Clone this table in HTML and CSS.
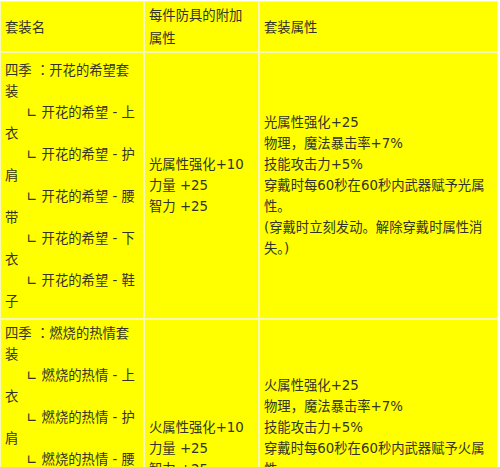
FILE: index.html
```html
<!DOCTYPE html>
<html lang="zh-CN">
<head>
<meta charset="utf-8">
<title>套装属性</title>
<link rel="stylesheet" href="styles.css">
</head>
<body>
<table class="sets">
  <colgroup>
    <col class="c-name">
    <col class="c-piece">
    <col class="c-set">
  </colgroup>
  <tr class="head">
    <td>套装名</td>
    <td>每件防具的附加属性</td>
    <td>套装属性</td>
  </tr>
  <tr class="set first">
    <td class="name">四季 <span class="colon" lang="zh-TW">：</span>开花的希望套装<br>&nbsp;&nbsp;&nbsp;&nbsp;&nbsp;∟ 开花的希望 - 上衣<br>&nbsp;&nbsp;&nbsp;&nbsp;&nbsp;∟ 开花的希望 - 护肩<br>&nbsp;&nbsp;&nbsp;&nbsp;&nbsp;∟ 开花的希望 - 腰带<br>&nbsp;&nbsp;&nbsp;&nbsp;&nbsp;∟ 开花的希望 - 下衣<br>&nbsp;&nbsp;&nbsp;&nbsp;&nbsp;∟ 开花的希望 - 鞋子</td>
    <td>光属性强化+10<br>力量 +25<br>智力 +25</td>
    <td>光属性强化+25<br>物理，魔法暴击率+7%<br>技能攻击力+5%<br>穿戴时每60秒在60秒内武器赋予光属性。<br>(穿戴时立刻发动。解除穿戴时属性消失。)</td>
  </tr>
  <tr class="set second">
    <td class="name">四季 <span class="colon" lang="zh-TW">：</span>燃烧的热情套装<br>&nbsp;&nbsp;&nbsp;&nbsp;&nbsp;∟ 燃烧的热情 - 上衣<br>&nbsp;&nbsp;&nbsp;&nbsp;&nbsp;∟ 燃烧的热情 - 护肩<br>&nbsp;&nbsp;&nbsp;&nbsp;&nbsp;∟ 燃烧的热情 - 腰带<br>&nbsp;&nbsp;&nbsp;&nbsp;&nbsp;∟ 燃烧的热情 - 下衣<br>&nbsp;&nbsp;&nbsp;&nbsp;&nbsp;∟ 燃烧的热情 - 鞋子</td>
    <td>火属性强化+10<br>力量 +25<br>智力 +25</td>
    <td>火属性强化+25<br>物理，魔法暴击率+7%<br>技能攻击力+5%<br>穿戴时每60秒在60秒内武器赋予火属性。<br>(穿戴时立刻发动。解除穿戴时属性消失。)</td>
  </tr>
</table>
</body>
</html>
```

FILE: styles.css
```css
html, body {
  margin: 0;
  padding: 0;
  background: #ffffff;
}
body {
  padding-top: 1px;
  font-family: "DejaVu Sans", "Noto Sans CJK SC", sans-serif;
  font-size: 13.33px;
  line-height: 21px;
  color: #333326;
}
.sets {
  width: 498px;
  table-layout: fixed;
  border-collapse: separate;
  border-spacing: 0;
  background: #ffff00;
}
.c-name { width: 144px; }
.c-piece { width: 115px; }
.c-set { width: 239px; }
.sets td {
  border: 1px solid #f7f7b8;
  padding: 0 4px;
  vertical-align: middle;
  background: #ffff00;
}
.colon {
  font-family: "Noto Sans CJK TC", sans-serif;
}
.head td {
  padding-top: 2px;
  padding-bottom: 1px;
  line-height: 23px;
}
.first td.name {
  padding-top: 6px;
  padding-bottom: 6px;
}
.second td.name {
  padding-top: 2px;
  padding-bottom: 2px;
}
```
